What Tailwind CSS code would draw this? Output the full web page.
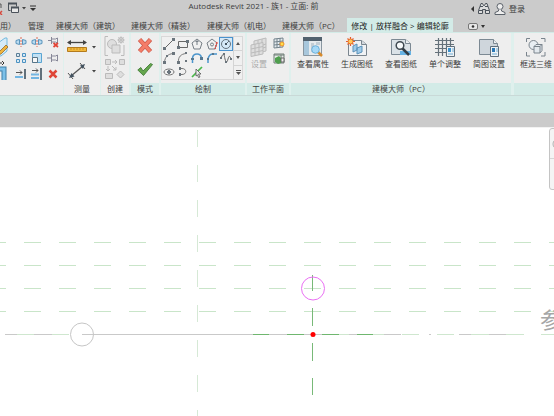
<!DOCTYPE html>
<html lang="zh-CN">
<head>
  <meta charset="UTF-8">
  <meta name="viewport" content="width=device-width, initial-scale=1">
  <title>Autodesk Revit 2021 - 族1 - 立面: 前</title>
  <script src="https://cdn.jsdelivr.net/npm/@tailwindcss/browser@4"></script>
</head>
<body class="flex h-screen flex-col overflow-hidden bg-white font-['Open_Sans','Noto_Sans_CJK_SC',sans-serif] text-[8px] leading-3 text-[#3c3c3c]">

  <!-- title bar -->
  <header class="flex h-[18px] shrink-0 items-start bg-[#cbcbcb]">
    <div class="flex h-4 w-[37px] shrink-0 items-center">
      <button aria-label="关闭隐藏窗口" class="w-2">
        <svg width="4" height="14" fill="none"><path d="M-2 10l4 4M2 10l-4 4" stroke="#d8483c" stroke-width="1.5"/><path d="M0 3h1v4" stroke="#555"/></svg>
      </button>
      <button aria-label="切换窗口" class="w-3">
        <svg width="12" height="12" fill="none" stroke="#4b525a"><path d="M.5 1.500h8v3M.5 1.500v7h2" /><path d="M0 1.500h9" stroke-width="2"/><path d="M3.500 5.500h7v5h-7z" fill="#e8e8e8"/><path d="M3 5.500h8" stroke-width="2"/></svg>
      </button>
      <button aria-label="窗口列表" class="ml-0.5 w-1.5">
        <svg width="4" height="3"><path d="M0 0h4L2 2.500z" fill="#444"/></svg>
      </button>
      <button aria-label="自定义快速访问工具栏" class="ml-0.5">
        <svg width="6" height="6"><path d="M0 1h6" stroke="#333"/><path d="M0 3h6L3 6z" fill="#333"/></svg>
      </button>
    </div>
    <h1 class="flex-1 text-center">Autodesk Revit 2021 - 族1 - 立面: 前</h1>
    <div class="flex h-[17px] w-[84px] shrink-0 items-center">
      <button aria-label="展开搜索" class="w-2"><svg width="4" height="6"><path d="M4 0v6L1 3z" fill="#333"/></svg></button>
      <button aria-label="搜索" class="w-4">
        <svg width="12" height="11" fill="#ddd" stroke="#4b525a"><path d="M2 3.500L3 .5h1.500l1 2h1l1-2H9l1 3 1.500 4v3h-4v-4h-3v4h-4v-3z"/><path d="M2 3.500h3M7 3.500h3M1 7.500h3M8 7.500h3"/></svg>
      </button>
      <button class="flex items-center gap-[3px]">
        <svg width="12" height="12" fill="#eee" stroke="#5b626a"><circle cx="6" cy="3.500" r="3"/><path d="M4.500 6.500v1.500L1 9.500v2h10v-2L7.500 8V6.500"/></svg>
        登录
      </button>
    </div>
  </header>

  <!-- ribbon tabs -->
  <nav class="flex h-3.5 shrink-0 items-end overflow-hidden whitespace-nowrap bg-[#cbcbcb]">
    <a href="#" class="mr-[11px] w-[17px]">用）</a>
    <a href="#" class="mr-3">管理</a>
    <a href="#" class="mr-[11px]">建模大师（建筑）</a>
    <a href="#" class="mr-3">建模大师（精装）</a>
    <a href="#" class="mr-[11px]">建模大师（机电）</a>
    <a href="#" class="w-[65px]">建模大师（PC）</a>
    <a href="#" class="flex h-full w-[106px] items-end justify-center bg-[#d3ebe7] text-[#222]">修改 | 放样融合 &gt; 编辑轮廓</a>
    <button aria-label="功能区显示" class="ml-[15px] pb-0.5">
      <svg width="17" height="7"><rect x=".5" y=".5" width="9" height="6" rx="1.500" fill="#e8e8e8" stroke="#777"/><circle cx="5" cy="3.500" r="1.300" fill="#333"/><path d="M13 2h4l-2 3z" fill="#333"/></svg>
    </button>
  </nav>

  <!-- ribbon panels -->
  <main class="flex h-16 shrink-0 overflow-hidden border-y border-t-[#d3ebe7] border-b-[#c9d9d7] bg-[#dff0ed]">

    <section aria-label="修改" class="mr-px flex w-[63px] shrink-0 bg-[#eeeeee]">
      <div class="flex w-[13px] flex-col gap-1 pt-1">
        <button aria-label="对齐">
          <svg width="9" height="20" fill="none"><path d="M-2 6L5 1h2v13l-6 5h-3z" fill="#d5ebf8" stroke="#73b9de"/><path d="M-1 15l7-7 2 2-7 7-3 1z" fill="#f0b53c" stroke="#8a5a1c" stroke-width=".7"/></svg>
        </button>
        <button aria-label="修剪">
          <svg width="9" height="20" fill="none"><path d="M-1 8h5v11" stroke="#3f7fa8" stroke-width="5"/><path d="M-1 8h5v11" stroke="#7cc0e8" stroke-width="3"/><path d="M-1 2h3M2 0l2 2-2 2" stroke="#333"/></svg>
        </button>
      </div>
      <div class="grid h-12 grid-cols-3 pt-px *:flex *:size-4 *:items-center *:justify-center">
        <button aria-label="镜像拾取轴"><svg width="12" height="10" fill="none"><path d="M6 0v10" stroke="#df6a55" stroke-dasharray="2 1"/><path d="M4.500 2.500v5L1 6.500v-3zM7.500 2.500v5l3.500-1v-3z" fill="#badbf0" stroke="#5a95bd"/></svg></button>
        <button aria-label="镜像绘制轴"><svg width="12" height="10" fill="none"><path d="M6 0v10" stroke="#df6a55" stroke-dasharray="2 1"/><path d="M4.500 2.500v5L1 6.500v-3zM7.500 2.500v5l3.500-1v-3z" fill="#badbf0" stroke="#5a95bd"/></svg></button>
        <button aria-label="解锁"><svg width="12" height="12" fill="none" stroke="#889"><path d="M4.500 1v7M4.500 3h4l2-1v5l-2-1h-4M1 4.500h3"/><path d="M6.500 7l4.500 4M11 7l-4.500 4" stroke="#e34335" stroke-width="1.700"/></svg></button>
        <button aria-label="阵列"><svg width="12" height="12" fill="#d9eaf4" stroke="#5c7e96"><path d="M1.500 1.500h3v3h-3z"/><path d="M7.500 1.500h3v3h-3zM1.500 7.500h3v3h-3zM7.500 7.500h3v3h-3z" stroke="#4c92c2"/></svg></button>
        <button aria-label="缩放"><svg width="12" height="12"><path d="M1.500 1.500h9v9h-9z" fill="#c2e1f4" stroke="#5aa5d2"/><path d="M1.500 5.500h5v5h-5z" fill="#f8f8f8" stroke="#5a7688"/></svg></button>
        <button aria-label="锁定"><svg width="12" height="10" fill="#eee" stroke="#889"><path d="M4.500 1v8M4.500 3h4l2-1v6l-2-1h-4M0 5h4"/></svg></button>
        <button aria-label="修剪单个图元"><svg width="12" height="12"><path d="M1 4.500h6M5 2.500l2 2-2 2" fill="none" stroke="#555"/><path d="M10 1v10" stroke="#62707b" stroke-width="2"/><path d="M0 9h8" stroke="#72b5e2" stroke-width="2"/></svg></button>
        <button aria-label="修剪多个图元"><svg width="12" height="12"><path d="M1 2.500h6M5 .5l2 2-2 2" fill="none" stroke="#555"/><path d="M10 0v12" stroke="#62707b" stroke-width="2"/><path d="M0 6.500h8M0 10h8" stroke="#72b5e2" stroke-width="2"/></svg></button>
        <button aria-label="删除"><svg width="10" height="10"><path d="M1.500 1.500l7 7M8.500 1.500l-7 7" stroke="#df4638" stroke-width="2.500"/></svg></button>
      </div>
    </section>

    <section class="mr-px flex w-9 shrink-0 flex-col bg-[#eeeeee]">
      <div class="flex h-[50px] flex-col gap-1 pl-[3px] pt-1">
        <button aria-label="测量距离" class="flex items-center gap-1">
          <svg width="21" height="20"><path d="M1 5.500h18" stroke="#444" stroke-width="1.300"/><path d="M0 5.500l4-2.500v5zM20 5.500l-4-2.500v5z" fill="#444"/><path d="M.5 10.500h19v4H.5z" fill="#f2b83b" stroke="#b47b1d"/><path d="M4 11v2M7 11v2M10 11v2M13 11v2M16 11v2" stroke="#c98d25"/></svg>
          <svg width="4" height="3"><path d="M0 0h4L2 2.500z" fill="#444"/></svg>
        </button>
        <button aria-label="尺寸标注" class="flex items-center gap-1">
          <svg width="21" height="20"><path d="M4 15L16 5" stroke="#555" stroke-width="1.200"/><path d="M1 12l5 6M13 2l5 6" stroke="#555"/><path d="M2 17l2.500-5 3 3.500zM18 3l-5 1.500 3 3.500z" fill="#445360"/></svg>
          <svg width="4" height="3"><path d="M0 0h4L2 2.500z" fill="#444"/></svg>
        </button>
      </div>
      <h2 class="text-center">测量</h2>
    </section>

    <section class="mr-0.5 flex w-7 shrink-0 flex-col bg-[#eeeeee]">
      <div class="flex h-[50px] flex-col items-center gap-[3px] pt-[3px]">
        <button disabled aria-label="创建组">
          <svg width="22" height="20" fill="#dedede" stroke="#bbb"><path d="M4 .5H1v19h3M17 19.500h3V9" fill="none"/><circle cx="8" cy="8" r="4.500"/><path d="M8 9h8v8H8z"/><circle cx="17" cy="4" r="2.500"/><path d="M17 0v8M13 4h8M14 1l6 6M20 1l-6 6" stroke-width=".6"/></svg>
        </button>
        <button disabled aria-label="创建类似实例">
          <svg width="22" height="20" fill="#dedede" stroke="#bbb"><path d="M1.500.5h5v5h-5zM15.500.5h5v5h-5zM1.500 14.500h7v5h-7z"/><path d="M16.500 12l3.500 3.500-3.500 3.500-3.500-3.500z"/><path d="M8 3h5M11 1l2 2-2 2M4 7v5M2 10l2 2 2-2M8 7l4 4M12 8v3H9" fill="none"/></svg>
        </button>
      </div>
      <h2 class="text-center">创建</h2>
    </section>

    <section class="mr-0.5 flex w-[28px] shrink-0 flex-col bg-[#eeeeee]">
      <div class="flex h-[50px] flex-col items-center gap-2 pt-1">
        <button aria-label="取消编辑模式"><svg width="16" height="17"><path d="M2.500 2.500l11 12M13.500 2.500l-11 12" stroke="#cf5a49" stroke-width="4.500"/><path d="M2.800 2.800l10.400 11.400M13.200 2.800L2.800 14.200" stroke="#f47d69" stroke-width="3"/></svg></button>
        <button aria-label="完成编辑模式"><svg width="16" height="15"><path d="M.8 8l3-2.500L6 9l7.500-7.500 2 1L6.500 13.500z" fill="#65a64d" stroke="#4d8443"/></svg></button>
      </div>
      <h2 class="bg-[#d3ebe7] text-center">模式</h2>
    </section>

    <section class="mr-0.5 flex w-[84px] shrink-0 flex-col bg-[#eeeeee]">
      <div class="h-[50px] pt-[3px]">
        <div class="flex h-11 w-[82px] border border-[#d8d8d8] bg-[#f0f0f0]">
          <div class="grid flex-1 grid-cols-5 grid-rows-3 *:flex *:items-center *:justify-center">
            <button aria-label="直线"><svg width="12" height="12"><path d="M2 10l8-8" stroke="#666"/><path d="M0 9h3v3H0zM9 0h3v3H9z" fill="#6a747c"/></svg></button>
            <button aria-label="矩形"><svg width="12" height="10"><path d="M1.500 2.500h9v6h-9z" fill="none" stroke="#666"/><path d="M9 1h3v3H9zM0 7h3v3H0z" fill="#6a747c"/></svg></button>
            <button aria-label="内接多边形"><svg width="12" height="12" fill="none" stroke="#777f86"><path d="M6 1l5 4-2 6H3L1 5z"/><path d="M6 2v5M4.500 3.500h3"/></svg></button>
            <button aria-label="外接多边形"><svg width="12" height="12" fill="none" stroke="#777f86"><path d="M6 1l5 4-2 6H3L1 5z"/><circle cx="6" cy="6.500" r="1.500"/><path d="M11 4L9 11" stroke="#e24b45" stroke-dasharray="2 1" stroke-width="1.500"/></svg></button>
            <button aria-label="圆形" aria-pressed="true" class="border border-[#4a93cf] bg-[#d5e9f8]"><svg width="12" height="12" fill="none" stroke="#66727c"><circle cx="6" cy="6" r="4.500"/><path d="M6 6l3-3"/><path d="M5 5h2v2H5z" fill="#465561" stroke="none"/></svg></button>
            <button aria-label="起点终点半径弧"><svg width="12" height="12"><path d="M1.500 10C2 5 5 2 10 1.500" fill="none" stroke="#777"/><path d="M0 9h3v3H0zM9 0h3v3H9zM3 3h2v2H3z" fill="#6a747c"/></svg></button>
            <button aria-label="圆心端点弧"><svg width="12" height="12"><path d="M1.500 10C1 5 4 2 9 1.500" fill="none" stroke="#777"/><path d="M0 9h3v3H0zM8 0h2v2H8zM8 8h2v2H8z" fill="#6a747c"/></svg></button>
            <button aria-label="相切弧"><svg width="12" height="12"><path d="M1.500 11V6Q2 2 6 2t4.500 4" fill="none" stroke="#4b95cc" stroke-width="1.500"/><path d="M0 6h3v2H0zM9 5h3v3H9z" fill="#567890"/></svg></button>
            <button aria-label="圆角弧"><svg width="12" height="12"><path d="M2 11V7Q3 2 7 2h4" fill="none" stroke="#4b95cc" stroke-width="1.500"/><path d="M1 6h2v2H1zM6 1h2v2H6z" fill="#567890"/></svg></button>
            <button aria-label="样条曲线"><svg width="12" height="12"><path d="M1 6C4-1 4 3 5 7s2 4 3 0 2-3 3 0" fill="none" stroke="#666"/><path d="M0 5h2v2H0zM3 1h2v2H3zM5 9h2v2H5zM10 6h2v2h-2z" fill="#6a747c"/></svg></button>
            <button aria-label="椭圆"><svg width="12" height="8"><ellipse cx="6" cy="4" rx="5" ry="3" fill="none" stroke="#777"/><path d="M5 2h2v4H5zM4 3h4v2H4z" fill="#6a747c"/></svg></button>
            <button aria-label="半椭圆"><svg width="8" height="10"><path d="M1 1.500h2c5 0 5 6 0 6H1" fill="none" stroke="#777"/><path d="M0 0h2v3H0zM0 6h2v3H0z" fill="#6a747c"/></svg></button>
            <button aria-label="拾取线"><svg width="12" height="12"><path d="M1 11L11 1" stroke="#49b84a" stroke-width="1.700"/><path d="M5 3l5 5H7.500L9 11 7.500 11.500 6.500 9 5 10z" fill="#eee" stroke="#555" stroke-width=".8"/></svg></button>
          </div>
          <div class="flex w-[9px] flex-col divide-y divide-[#d4d4d4] border-l border-[#d4d4d4] *:flex *:flex-1 *:items-center *:justify-center">
            <button aria-label="向上滚动"><svg width="4" height="3"><path d="M0 3h4L2 0z" fill="#555"/></svg></button>
            <button aria-label="向下滚动"><svg width="4" height="3"><path d="M0 0h4L2 3z" fill="#555"/></svg></button>
            <button aria-label="展开"><svg width="5" height="5"><path d="M0 .5h5" stroke="#555"/><path d="M0 2h5L2.500 5z" fill="#555"/></svg></button>
          </div>
        </div>
      </div>
      <h2 class="bg-[#d3ebe7] text-center">绘制</h2>
    </section>

    <section class="mr-0.5 flex w-[42px] shrink-0 flex-col bg-[#eeeeee]">
      <div class="flex h-[50px] gap-1 pl-0.5 pt-1">
        <button disabled class="flex w-5 flex-col items-center text-[#aaa]">
          <svg width="20" height="21" fill="#dedede" stroke="#bbb"><path d="M5 4l12-3v13L5 17z"/><path d="M2 8l12-2.500V17L2 19.500z"/><path d="M6 7v12M10 6v12M2 12l12-2.500M2 16l12-2.500M9 3v3M13 2v4M14 8l3-1M14 11l3-1" fill="none"/></svg>
          设置
        </button>
        <div class="flex flex-col gap-1">
          <button aria-label="显示工作平面"><svg width="13" height="12" fill="#e4eaee" stroke="#74838c"><path d="M1 2l9-1v9l-9 1z"/><path d="M4 2v9M7 1v9M1 5l9-1M1 8l9-1" fill="none"/><circle cx="9" cy="7" r="2" fill="#ffe04a" stroke="#ef912a"/></svg></button>
          <button aria-label="查看器"><svg width="13" height="12"><path d="M1 1h10v9H1z" fill="#e8eeea" stroke="#6f7d76"/><path d="M1 2h10M8 2v8" stroke="#6f7d76"/><path d="M2 5l4-2 2 2v5l-3 1-3-2z" fill="#4f9f4e"/><path d="M8 5h3v4H8z" fill="#eee" stroke="#666"/></svg></button>
        </div>
      </div>
      <h2 class="bg-[#d3ebe7] text-center">工作平面</h2>
    </section>

    <section class="mr-[3px] flex w-[220px] shrink-0 flex-col bg-[#eeeeee]">
      <div class="grid h-[50px] grid-cols-5 pt-1 *:flex *:flex-col *:items-center">
        <button>
          <svg width="20" height="21"><path d="M.5.5h18v18H.5z" fill="#e6eaed" stroke="#8996a0"/><path d="M0 0h19v4H0z" fill="#52616e"/><path d="M1 4h5v14H1z" fill="#a8c7dc"/><path d="M8 6h3v9H8zM13 5h4v3h-4z" fill="#c2cdd5"/><path d="M15 15l4 4" stroke="#d78b2c" stroke-width="2.500"/><circle cx="12.500" cy="12.500" r="3.800" fill="#a5d8f7" stroke="#6cb0da"/></svg>
          查看属性
        </button>
        <button>
          <svg width="22" height="21"><path d="M2.500 3.500h13l5 4v11h-18z" fill="#f0f2f4" stroke="#7a858e"/><path d="M15.500 3.500v4h5" fill="#d3d9de" stroke="#7a858e"/><path d="M7 9l4-2v6l-4 2zM11 11l5-2v6l-5 2z" fill="#9ecbea" stroke="#5a91b8"/><path d="M4.500 0v9M0 4.500h9M1.500 1.500l6 6M7.500 1.500l-6 6" stroke="#e5592f" stroke-width="1.200"/><circle cx="4.500" cy="4.500" r="2.500" fill="#ffc85a" stroke="#e8762c"/></svg>
          生成图纸
        </button>
        <button>
          <svg width="21" height="21"><path d="M.5 2.500h14l5 4v11H.5z" fill="#dbe2e7" stroke="#7c8993"/><path d="M14.500 2.500v4h5" fill="#eef1f3" stroke="#7c8993"/><path d="M9 14h11v4H9z" fill="#67b3e4"/><path d="M11 11l7 7" stroke="#333d45" stroke-width="2.500"/><circle cx="9" cy="8.500" r="3.800" fill="#f7fafb" stroke="#3f4951" stroke-width="1.500"/></svg>
          查看图纸
        </button>
        <button>
          <svg width="21" height="21"><path d="M3.500 1v18M7.500 1v18M11.500 1v18M15.500 1v9M0 3.500h19M0 7.500h19M0 11.500h14M0 15.500h14" stroke="#65717a" stroke-width="1.200"/><path d="M11.500 9.500h8v10h-8z" fill="#eef2f5" stroke="#60707d"/><path d="M13 11h3v4h-3z" fill="#3d91cc"/><path d="M17 12h2M17 14h2M13 17h5" stroke="#6faed6"/></svg>
          单个调整
        </button>
        <button>
          <svg width="21" height="21"><path d="M.5 2.500h14l4 4v11H.5z" fill="#cfd6dc" stroke="#7c8993"/><path d="M14.500 2.500v4h4" fill="#eef1f3" stroke="#7c8993"/><path d="M11.500 9.500h8v10h-8z" fill="#eef2f5" stroke="#60707d"/><path d="M13 11h3v4h-3z" fill="#2b78b5"/><path d="M17 12h2M17 14h2M13 17h5" stroke="#6faed6"/></svg>
          简图设置
        </button>
      </div>
      <h2 class="bg-[#d3ebe7] text-center">建模大师（PC）</h2>
    </section>

    <section aria-label="三维" class="flex min-w-0 flex-1 flex-col bg-[#eeeeee]">
      <div class="h-[50px] w-11 pt-1">
        <button class="flex w-full flex-col items-center whitespace-nowrap">
          <svg width="20" height="21" fill="none" stroke="#7a848d"><path d="M.5 5V1.500H4M15 1.500h4V5M.5 15v4H4M15 19h4v-4"/><circle cx="7.500" cy="8" r="4.500" fill="#e8eef3"/><path d="M8 9.500l2-2h6v6l-2 2.500H8z" fill="#e3e9ee"/><path d="M8 9.500h6V16M14 9.500l2-2"/></svg>
          框选三维
        </button>
      </div>
      <div class="h-3 bg-[#d3ebe7]"></div>
    </section>
  </main>

  <!-- options bar and view tab strip -->
  <div class="h-[17px] shrink-0 bg-[#d3ebe7]"></div>
  <div class="h-3.5 shrink-0 bg-[#cbcbcb]"></div>

  <!-- drawing area -->
  <div class="relative min-h-0 flex-1 overflow-hidden border-t border-[#f2f2f2] bg-white">
    <svg class="block size-full" fill="none" aria-label="立面: 前">
      <!-- reference planes -->
      <g stroke="#c9e5c9" stroke-dasharray="17 18" stroke-dashoffset="11">
        <path d="M0 114.500h2000M0 137.500h2000M0 160.500h2000M0 183.500h2000"/>
      </g>
      <path d="M197.500 2v2000" stroke="#d6e9d6" stroke-dasharray="17 18"/>

      <!-- sweep path -->
      <path d="M5 206.500h64M82 206.500h319M429 206.500h2M459 206.500h47" stroke="#c9c9c9"/>
      <path d="M17 206.500h17M52 206.500h17M339 206.500h10M373 206.500h11M402 206.500h17M437 206.500h17M471 206.500h18M506 206.500h18M541 206.500h18" stroke="#cfe7cf"/>
      <path d="M253 206.500h16M287 206.500h17M322 206.500h17M357 206.500h16" stroke="#6fb76f"/>
      <path d="M312.500 147v16M312.500 180v18M312.500 215v18M312.500 250v17" stroke="#78b978"/>
      <circle cx="82" cy="206.500" r="11.500" stroke="#c6c6c6"/>
      <circle cx="313" cy="160.500" r="11.500" stroke="#ea70f4"/>
      <circle cx="313" cy="206.500" r="2.500" fill="#ff0000"/>
    </svg>
    <span class="absolute left-[540px] top-[179px] whitespace-nowrap text-[22px] leading-6 text-[#a6a6a6]">参</span>

    <!-- navigation bar -->
    <div class="absolute left-[549px] top-0 h-[62px] w-6 rounded-[3px] border border-[#c4c4c4] bg-[#f4f4f4]">
      <button aria-label="控制盘" class="flex h-[30px] w-full items-center border-b border-[#d6d6d6] pl-0.5">
        <svg width="12" height="12" fill="none"><circle cx="6" cy="6" r="5" stroke="#b0b0b0"/></svg>
      </button>
    </div>
  </div>
</body>
</html>
